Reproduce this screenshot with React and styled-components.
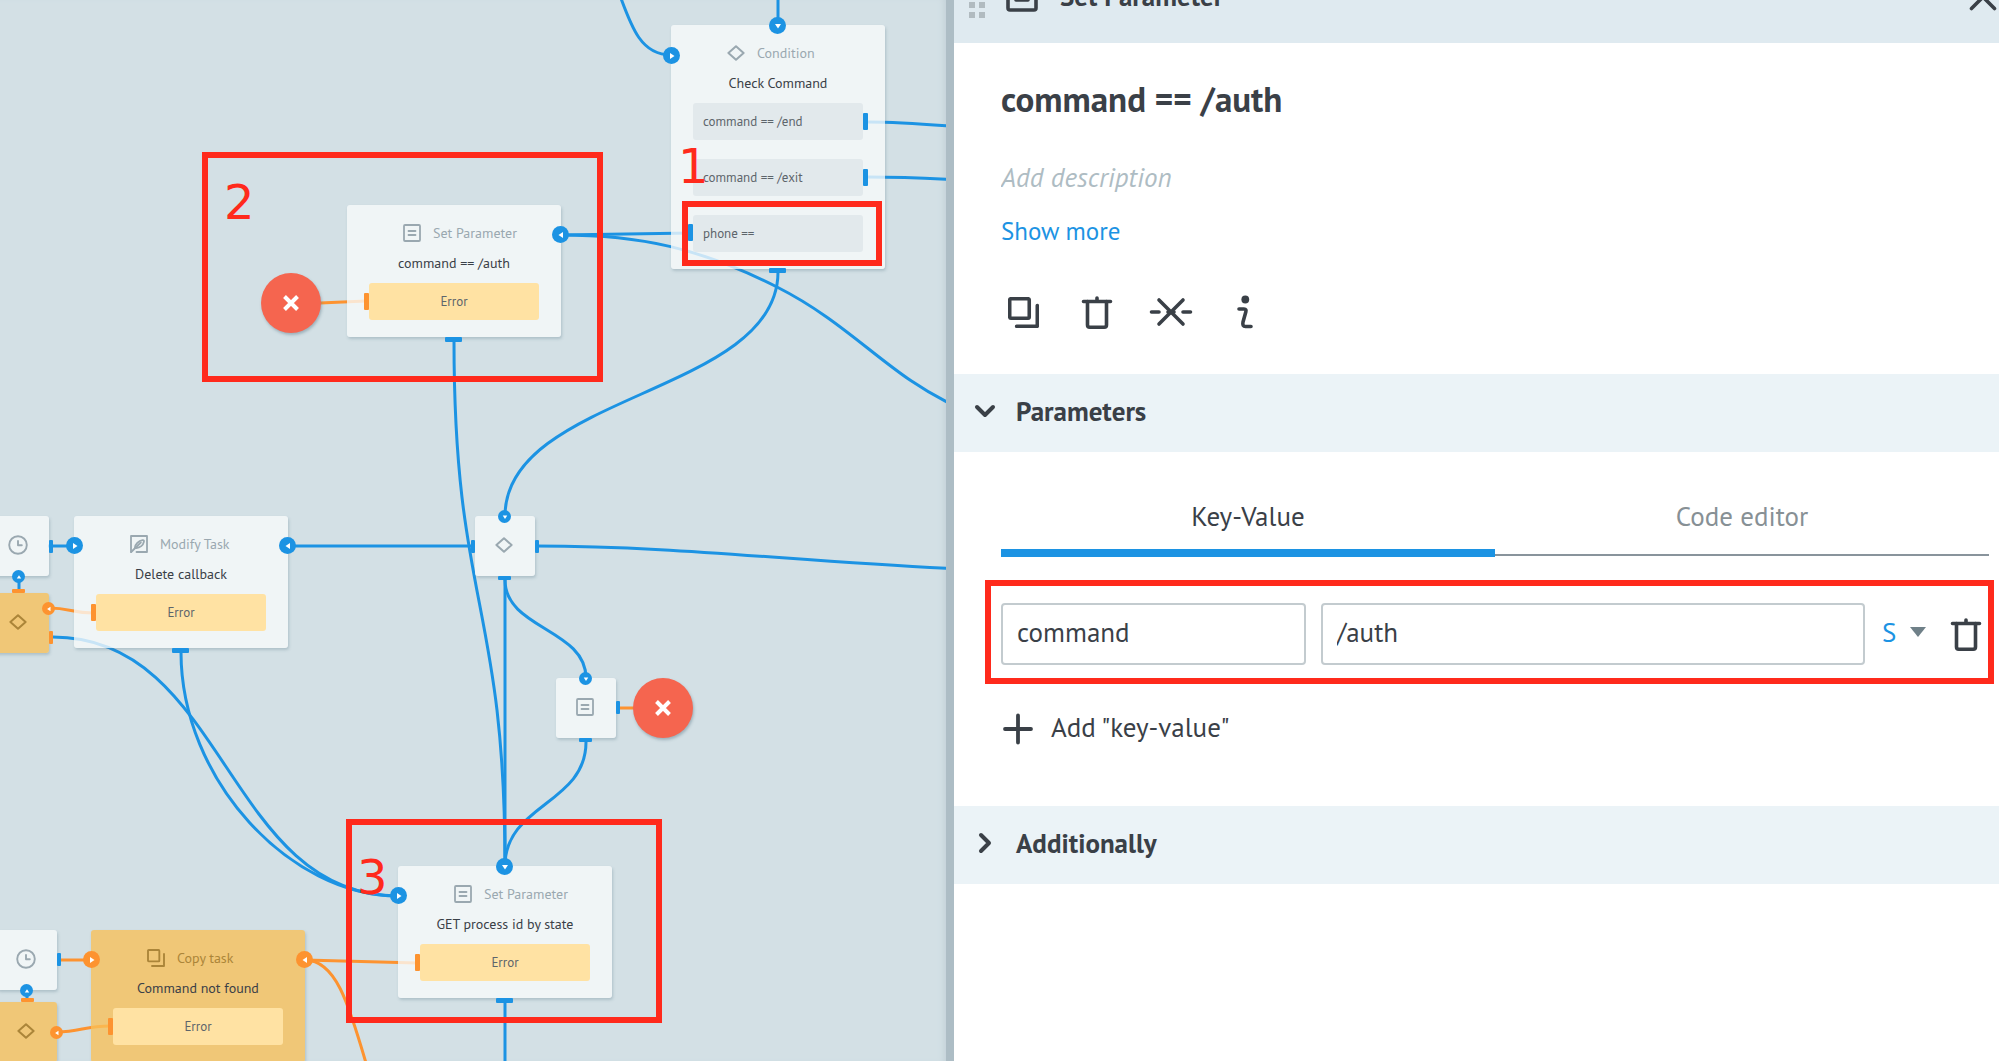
import React, { useState } from "react";
import styled, { createGlobalStyle, css } from "styled-components";

const color = {
  blue: "#1c93e3",
  orange: "#fd9330",
  red: "#ff2a1c",
  ink: "#3a4047",
  canvas: "#d3e0e5",
  divider: "#adbdc5",
};

const GlobalStyle = createGlobalStyle`
  *, *::before, *::after { box-sizing: border-box; }
  body {
    margin: 0;
    background: #ffffff;
    color: ${color.ink};
    font-family: "PT Sans", Lato, "Open Sans", sans-serif;
  }
  button, input, select { font: inherit; color: inherit; }
`;

const Page = styled.main`
  display: grid;
  grid-template-columns: minmax(0, 946fr) 8px minmax(0, 1045fr);
  height: 100vh;
  overflow: hidden;
`;

const Divider = styled.div`
  background: ${color.divider};
`;

/* ---------- process canvas ---------- */

const Canvas = styled.section`
  position: relative;
  overflow: hidden;
  background: ${color.canvas};
  box-shadow: inset -6px 0 6px -4px #c2d0d7;
`;

const EdgeLayer = styled.svg`
  position: absolute;
  inset: 0;
  width: 100%;
  height: 100%;
  fill: none;
  stroke-width: 3;
`;

const tones = {
  plain: { box: "rgba(249, 251, 251, 0.78)", muted: "#9aa8b0" },
  warm: { box: "rgba(248, 192, 88, 0.78)", muted: "#ab8539" },
};

const nodeBox = css`
  position: absolute;
  left: ${(p) => p.$x}px;
  top: ${(p) => p.$y}px;
  border-radius: 3px;
  background: ${(p) => tones[p.$tone].box};
  box-shadow: 1px 2px 3px rgba(90, 120, 135, 0.3);
`;

const NodeCard = styled.article`
  ${nodeBox}
  display: flex;
  flex-direction: column;
  width: 214px;
  padding: 18px 22px 17px;
`;

const NodeChip = styled.article`
  ${nodeBox}
  display: grid;
  place-items: center;
  width: 60px;
  height: 60px;
  padding: 0 2px 2px 0;
  color: ${(p) => tones[p.$tone].muted};
`;

const NodeKind = styled.div`
  display: flex;
  align-items: center;
  gap: 12px;
  height: 20px;
  padding-left: 34px;
  font-size: 14px;
  line-height: 20px;
  color: ${(p) => tones[p.$tone].muted};
`;

const NodeTitle = styled.h3`
  margin: 10px 0;
  font-size: 14px;
  font-weight: 400;
  line-height: 20px;
  text-align: center;
  white-space: nowrap;
`;

const Branches = styled.div`
  display: grid;
  gap: 19px;
`;

const Branch = styled.div`
  height: 37px;
  padding: 0 10px;
  border-radius: 3px;
  font-size: 13px;
  line-height: 37px;
  color: #5d656b;
  text-align: ${(p) => (p.$error ? "center" : "left")};
  background: ${(p) => (p.$error ? "#ffe2a3" : "#e2e9ec")};
`;

const StopNode = styled.div`
  position: absolute;
  left: ${(p) => p.$x}px;
  top: ${(p) => p.$y}px;
  display: grid;
  place-items: center;
  width: 60px;
  height: 60px;
  border-radius: 50%;
  background: #f5654f;
  box-shadow: 1px 2px 3px rgba(90, 120, 135, 0.45);
`;

const RoundPort = styled.span`
  position: absolute;
  left: ${(p) => p.$x}px;
  top: ${(p) => p.$y}px;
  display: grid;
  place-items: center;
  width: ${(p) => (p.$small ? 13 : 17)}px;
  height: ${(p) => (p.$small ? 13 : 17)}px;
  border-radius: 50%;
  background: ${(p) => color[p.$tint]};
`;

const Tab = styled.span`
  position: absolute;
  left: ${(p) => p.$x}px;
  top: ${(p) => p.$y}px;
  width: ${(p) => p.$w}px;
  height: ${(p) => p.$h}px;
  border-radius: 1px;
  background: ${(p) => color[p.$tint]};
`;

const Marker = styled.div`
  position: absolute;
  left: ${(p) => p.$x}px;
  top: ${(p) => p.$y}px;
  width: ${(p) => p.$w}px;
  height: ${(p) => p.$h}px;
  border: 6px solid ${color.red};
`;

const MarkerNumber = styled.span`
  position: absolute;
  left: ${(p) => p.$x}px;
  top: ${(p) => p.$y}px;
  font-family: "DejaVu Sans", sans-serif;
  font-size: 48px;
  line-height: 48px;
  color: ${color.red};
`;

/* ---------- properties panel ---------- */

const Panel = styled.aside`
  overflow: hidden;
  font-size: 27px;
  line-height: 32px;
`;

const PanelHeader = styled.header`
  display: flex;
  align-items: center;
  height: 90px;
  margin-top: -47px;
  padding: 0 1px 0 15px;
  background: #dfeaf0;
`;

const HeaderTitle = styled.h1`
  flex: 1;
  margin: 0;
  padding: 0 0 4px 22px;
  font-size: 27px;
  font-weight: 700;
`;

const HeaderIcon = styled.span`
  display: flex;
  padding-left: 21px;
`;

const IconButton = styled.button`
  display: grid;
  place-items: center;
  width: ${(p) => p.$w || 44}px;
  height: 44px;
  padding: 0;
  border: 0;
  background: none;
  cursor: pointer;
`;

const Summary = styled.section`
  display: flex;
  flex-direction: column;
  align-items: flex-start;
  padding: 36px 10px 40px 47px;
`;

const Name = styled.h2`
  margin: 0 0 42px;
  font-size: 35px;
  font-weight: 700;
  line-height: 40px;
`;

const Description = styled.input`
  width: 100%;
  height: 32px;
  margin-bottom: 22px;
  padding: 0;
  border: 0;
  outline: 0;
  font-style: italic;
  &::placeholder { color: #aebcc3; opacity: 1; }
`;

const MoreLink = styled.a`
  margin-bottom: 43px;
  color: ${color.blue};
  font-size: 25px;
  text-decoration: none;
`;

const Tools = styled.div`
  display: flex;
  gap: 30px;
`;

const SectionToggle = styled.button`
  display: flex;
  align-items: center;
  gap: 18px;
  width: 100%;
  height: 78px;
  padding: 0 0 4px 16px;
  border: 0;
  background: #ebf3f7;
  font-weight: 700;
  text-align: left;
  cursor: pointer;
`;

const Parameters = styled.section`
  padding: 48px 10px 61px 47px;
`;

const TabList = styled.div`
  display: grid;
  grid-template-columns: 1fr 1fr;
  height: 57px;
  margin-bottom: 46px;
`;

const TabButton = styled.button`
  height: ${(p) => (p.$active ? 57 : 56)}px;
  padding: 0 0 ${(p) => (p.$active ? 17 : 22)}px;
  border: 0;
  border-bottom: ${(p) => (p.$active ? `8px solid ${color.blue}` : "2px solid #89949c")};
  background: none;
  color: ${(p) => (p.$active ? color.ink : "#879095")};
  line-height: 32px;
  cursor: pointer;
`;

const PairRow = styled.div`
  position: relative;
  display: grid;
  grid-template-columns: minmax(0, 305fr) minmax(0, 545fr) auto auto;
  align-items: center;
  gap: 15px;
`;

const PairHighlight = styled.div`
  position: absolute;
  inset: -23px -5px -19px -16px;
  border: 6px solid ${color.red};
  pointer-events: none;
`;

const Field = styled.input`
  width: 100%;
  height: 62px;
  padding: 0 14px 4px;
  border: 2px solid #c3cbcf;
  border-radius: 4px;
  outline: 0;
  background: #ffffff;
`;

const TypePicker = styled.div`
  display: grid;
  grid-template-columns: 1fr 18px;
  align-items: center;
  width: 48px;
  padding-bottom: 4px;
  color: ${color.blue};
  & > * { grid-row: 1; }
  select {
    grid-column: 1 / 3;
    width: 100%;
    padding: 0 0 0 2px;
    border: 0;
    outline: 0;
    appearance: none;
    background: none;
    cursor: pointer;
  }
  svg { grid-column: 2; pointer-events: none; }
`;

const AddButton = styled.button`
  display: flex;
  align-items: center;
  gap: 18px;
  height: 32px;
  margin-top: 48px;
  padding: 0 0 0 2px;
  border: 0;
  background: none;
  cursor: pointer;
  span { padding-bottom: 4px; }
`;

/* ---------- drawings ---------- */

const line = { fill: "none", stroke: "currentColor", strokeLinecap: "round", strokeLinejoin: "round" };

const Diamond = () => (
  <svg width="18" height="16" viewBox="0 0 18 16" {...line} strokeWidth="2">
    <path d="M9 1.2 16.6 8 9 14.8 1.4 8Z" />
  </svg>
);
const Doc = () => (
  <svg width="18" height="18" viewBox="0 0 18 18" {...line} strokeWidth="1.8">
    <rect x="1" y="1" width="16" height="16" rx="1" />
    <path d="M5.5 7h7M5.5 11h7" />
  </svg>
);
const Clock = () => (
  <svg width="20" height="20" viewBox="0 0 20 20" {...line} strokeWidth="1.9">
    <circle cx="10" cy="10" r="8.8" />
    <path d="M10 6v4.200h3.800" />
  </svg>
);
const Modify = () => (
  <svg width="18" height="18" viewBox="0 0 18 18" {...line} strokeWidth="1.8">
    <path d="M1 17V1h16v16H6.500" />
    <path d="M1.200 17 10.800 7.500" />
    <path d="M4.800 13C5 9.200 8.600 5.800 12.600 5.200c1.300-.2 1.500.6 1.300 1.600-.7 3.300-3.900 6-7.600 6.200" />
  </svg>
);
const Copy = ({ size = 18, weight = 5.6 }) => (
  <svg width={size} height={size} viewBox="0 0 54 54" {...line} strokeWidth={weight}>
    <rect x="3" y="3" width="34" height="34" rx="2" />
    <path d="M51 15v36H15" />
  </svg>
);
const Cross = () => (
  <svg width="18" height="18" viewBox="0 0 18 18" stroke="#fff" strokeWidth="4">
    <path d="M2.500 2.500l13 13M15.500 2.500l-13 13" />
  </svg>
);
const Trash = () => (
  <svg width="32" height="36" viewBox="0 0 32 36" {...line} strokeWidth="3.600">
    <path d="M2.500 7.500h27M16 4V7.500" />
    <path d="M6.500 7.500v23.500c0 1.600.6 2.200 2.200 2.200h14.600c1.600 0 2.200-.6 2.200-2.200V7.500" />
  </svg>
);
const Disconnect = () => (
  <svg width="44" height="30" viewBox="0 0 44 30" {...line} strokeWidth="3.600">
    <path d="M2.500 15H10M34 15h7.500M10 3l24 24M34 3 10 27" />
    <path d="M19 15h6" />
  </svg>
);
const Info = () => (
  <svg width="18" height="36" viewBox="0 0 18 36" {...line} strokeWidth="3.600">
    <circle cx="9.300" cy="5.500" r="3.900" fill="currentColor" stroke="none" />
    <path d="M3 15h5c2 0 2.300 1.300 1.800 3L7 28c-.6 3 .2 4.500 2.500 4.500H15" />
  </svg>
);
const HeaderDoc = () => (
  <svg width="32" height="28" viewBox="0 0 32 28" {...line} strokeWidth="3.600">
    <rect x="2" y="2" width="28" height="24" rx="2" />
    <path d="M10 10h12M10 16h12" />
  </svg>
);
const Grip = () => (
  <svg width="16" height="40" viewBox="0 0 16 40" fill="#b1bbc0">
    {[4, 14, 24, 34].map((y) => (
      <React.Fragment key={y}>
        <rect x="0" y={y} width="6" height="6" />
        <rect x="10" y={y} width="6" height="6" />
      </React.Fragment>
    ))}
  </svg>
);
const Close = () => (
  <svg width="28" height="28" viewBox="0 0 28 28" {...line} strokeWidth="3.600">
    <path d="M2.500 1.500l23 23M25.500 1.500l-23 23" />
  </svg>
);
const Chevron = ({ open }) => (
  <svg width="28" height="22" viewBox="0 0 28 22" {...line} strokeWidth="4">
    <path d={open ? "M7 7l8 8 8-8" : "M11 3l8 8-8 8"} />
  </svg>
);
const Plus = () => (
  <svg width="30" height="32" viewBox="0 0 30 32" {...line} strokeWidth="3.800">
    <path d="M15 2.500v27M2 16h26" />
  </svg>
);
const Caret = () => (
  <svg width="16" height="10" viewBox="0 0 16 10" fill="#6f8088">
    <path d="M0 0h16L8 10z" />
  </svg>
);

const arrows = {
  down: "M1 2h6L4 6.500z",
  up: "M1 6h6L4 1.500z",
  left: "M6 1v6L1.500 4z",
  right: "M2 1v6l4.500-3z",
};

/* x and y are the middle of the circle, measured from the node's corner */
const Port = ({ x, y, dir, small, tint = "blue" }) => {
  const r = small ? 6 : 8;
  return (
    <RoundPort $x={x - r} $y={y - r} $small={small} $tint={tint}>
      <svg width={small ? 6 : 8} height={small ? 6 : 8} viewBox="0 0 8 8" fill="#fff">
        <path d={arrows[dir]} />
      </svg>
    </RoundPort>
  );
};

const Kind = ({ tone, icon, children }) => (
  <NodeKind $tone={tone}>
    {icon}
    <span>{children}</span>
  </NodeKind>
);

const Card = ({ x, y, tone = "plain", icon, kind, title, branches, error, children }) => (
  <NodeCard $x={x} $y={y} $tone={tone}>
    <Kind tone={tone} icon={icon}>{kind}</Kind>
    <NodeTitle>{title}</NodeTitle>
    <Branches>
      {(branches || []).map((b) => <Branch key={b}>{b}</Branch>)}
      {error && <Branch $error>Error</Branch>}
    </Branches>
    {children}
  </NodeCard>
);

const Chip = ({ x, y, tone = "plain", icon, children }) => (
  <NodeChip $x={x} $y={y} $tone={tone}>
    {icon}
    {children}
  </NodeChip>
);

const blueEdges = [
  "M778 0V25",
  "M618-10C632 30 642 55 671 55",
  "M868 122C900 122 925 124 960 127",
  "M868 177C900 177 925 178 960 180",
  "M692 233 560 235",
  "M560 235C640 235 700 248 777 287S890 378 960 408",
  "M778 272C778 394 505 394 505 516",
  "M454 341C454 604 505 604 505 866",
  "M505 580V866",
  "M505 580C505 629 586 629 586 678",
  "M586 742C586 804 505 804 505 866",
  "M287 546H475",
  "M535 546C680 546 800 562 960 569",
  "M48 546H74",
  "M19 576V590",
  "M53 637C226 637 226 896 398 896",
  "M181 652C181 780 290 896 398 896",
  "M27 990V1000",
  "M505 1002V1200",
];

const orangeEdges = [
  "M320 303 366 301",
  "M49 608C70 608 72 613 93 613",
  "M618 708H636",
  "M59 960H91",
  "M57 1032C80 1032 85 1026 110 1026",
  "M305 960 417 963",
  "M305 960C335 960 348 1000 368 1070",
];

const ProcessCanvas = () => (
  <Canvas aria-label="Process">
    <EdgeLayer aria-hidden="true">
      <g stroke={color.blue}>{blueEdges.map((d) => <path key={d} d={d} />)}</g>
      <g stroke={color.orange}>{orangeEdges.map((d) => <path key={d} d={d} />)}</g>
    </EdgeLayer>

    <Card
      x={671} y={25} icon={<Diamond />} kind="Condition" title="Check Command"
      branches={["command == /end", "command == /exit", "phone =="]}
    >
      <Port x={106} y={0} dir="down" />
      <Port x={0} y={30} dir="right" />
      <Tab $x={192} $y={88} $w={5} $h={17} $tint="blue" />
      <Tab $x={192} $y={144} $w={5} $h={17} $tint="blue" />
      <Tab $x={17} $y={199} $w={5} $h={17} $tint="blue" />
      <Tab $x={98} $y={243} $w={17} $h={5} $tint="blue" />
    </Card>

    <Card x={347} y={205} icon={<Doc />} kind="Set Parameter" title="command == /auth" error>
      <Port x={213} y={29} dir="left" />
      <Tab $x={17} $y={88} $w={5} $h={17} $tint="orange" />
      <Tab $x={98} $y={132} $w={17} $h={5} $tint="blue" />
    </Card>
    <StopNode $x={261} $y={273}><Cross /></StopNode>

    <Chip x={-11} y={516} icon={<Clock />}>
      <Tab $x={60} $y={24} $w={4} $h={13} $tint="blue" />
      <Port x={29} y={60} dir="up" small />
    </Chip>
    <Chip x={-11} y={593} tone="warm" icon={<Diamond />}>
      <Tab $x={23} $y={-4} $w={13} $h={4} $tint="orange" />
      <Port x={59} y={15} dir="left" small tint="orange" />
      <Tab $x={60} $y={38} $w={4} $h={13} $tint="orange" />
    </Chip>

    <Card x={74} y={516} icon={<Modify />} kind="Modify Task" title="Delete callback" error>
      <Port x={0} y={29} dir="right" />
      <Port x={213} y={29} dir="left" />
      <Tab $x={17} $y={88} $w={5} $h={17} $tint="orange" />
      <Tab $x={98} $y={132} $w={17} $h={5} $tint="blue" />
    </Card>

    <Chip x={475} y={516} icon={<Diamond />}>
      <Port x={29} y={0} dir="down" small />
      <Tab $x={-4} $y={24} $w={4} $h={13} $tint="blue" />
      <Tab $x={60} $y={24} $w={4} $h={13} $tint="blue" />
      <Tab $x={23} $y={60} $w={13} $h={4} $tint="blue" />
    </Chip>

    <Chip x={556} y={678} icon={<Doc />}>
      <Port x={29} y={0} dir="down" small />
      <Tab $x={60} $y={23} $w={4} $h={13} $tint="blue" />
      <Tab $x={23} $y={60} $w={13} $h={4} $tint="blue" />
    </Chip>
    <StopNode $x={633} $y={678}><Cross /></StopNode>

    <Card x={398} y={866} icon={<Doc />} kind="Set Parameter" title="GET process id by state" error>
      <Port x={106} y={0} dir="down" />
      <Port x={0} y={29} dir="right" />
      <Tab $x={17} $y={88} $w={5} $h={17} $tint="orange" />
      <Tab $x={98} $y={132} $w={17} $h={5} $tint="blue" />
    </Card>

    <Chip x={-3} y={930} icon={<Clock />}>
      <Tab $x={60} $y={23} $w={4} $h={13} $tint="blue" />
      <Port x={29} y={60} dir="up" small />
    </Chip>
    <Chip x={-3} y={1002} tone="warm" icon={<Diamond />}>
      <Tab $x={24} $y={-4} $w={13} $h={4} $tint="orange" />
      <Port x={59} y={30} dir="left" small tint="orange" />
    </Chip>

    <Card x={91} y={930} tone="warm" icon={<Copy />} kind="Copy task" title="Command not found" error>
      <Port x={0} y={29} dir="right" tint="orange" />
      <Port x={213} y={29} dir="left" tint="orange" />
      <Tab $x={17} $y={88} $w={5} $h={17} $tint="orange" />
    </Card>

    <Marker $x={682} $y={201} $w={200} $h={65} />
    <MarkerNumber $x={678} $y={142}>1</MarkerNumber>
    <Marker $x={202} $y={152} $w={401} $h={230} />
    <MarkerNumber $x={224} $y={178}>2</MarkerNumber>
    <Marker $x={346} $y={819} $w={316} $h={204} />
    <MarkerNumber $x={357} $y={853}>3</MarkerNumber>
  </Canvas>
);

const PropertiesPanel = () => {
  const [tab, setTab] = useState("kv");
  return (
    <Panel aria-label="Node properties">
      <PanelHeader>
        <Grip />
        <HeaderIcon><HeaderDoc /></HeaderIcon>
        <HeaderTitle>Set Parameter</HeaderTitle>
        <IconButton $w={30} aria-label="Close"><Close /></IconButton>
      </PanelHeader>

      <Summary>
        <Name>command == /auth</Name>
        <Description aria-label="Description" placeholder="Add description" />
        <MoreLink href="#more">Show more</MoreLink>
        <Tools>
          <IconButton aria-label="Copy"><Copy size={31} weight={6.2} /></IconButton>
          <IconButton aria-label="Delete"><Trash /></IconButton>
          <IconButton aria-label="Disconnect"><Disconnect /></IconButton>
          <IconButton aria-label="Info"><Info /></IconButton>
        </Tools>
      </Summary>

      <SectionToggle aria-expanded="true"><Chevron open />Parameters</SectionToggle>
      <Parameters>
        <TabList role="tablist">
          <TabButton role="tab" aria-selected={tab === "kv"} $active={tab === "kv"} onClick={() => setTab("kv")}>
            Key-Value
          </TabButton>
          <TabButton role="tab" aria-selected={tab === "code"} $active={tab === "code"} onClick={() => setTab("code")}>
            Code editor
          </TabButton>
        </TabList>
        <PairRow>
          <Field aria-label="Key" defaultValue="command" />
          <Field aria-label="Value" defaultValue="/auth" />
          <TypePicker>
            <select aria-label="Value type" defaultValue="S">
              <option>S</option>
              <option>N</option>
              <option>B</option>
            </select>
            <Caret />
          </TypePicker>
          <IconButton $w={46} aria-label="Remove pair"><Trash /></IconButton>
          <PairHighlight />
        </PairRow>
        <AddButton><Plus /><span>Add "key-value"</span></AddButton>
      </Parameters>
      <SectionToggle aria-expanded="false"><Chevron />Additionally</SectionToggle>
    </Panel>
  );
};

export default function App() {
  return (
    <Page>
      <GlobalStyle />
      <ProcessCanvas />
      <Divider />
      <PropertiesPanel />
    </Page>
  );
}
